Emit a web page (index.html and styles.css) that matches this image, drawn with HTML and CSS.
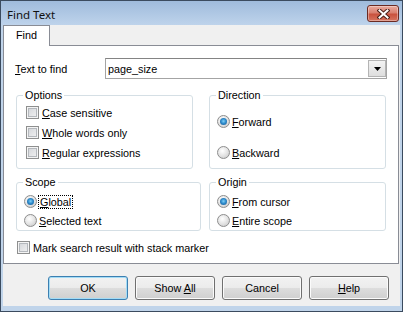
FILE: index.html
```html
<!DOCTYPE html>
<html>
<head>
    <title>Find Text</title>
    <link rel="stylesheet" href="styles.css">
</head>
<body>
    <div class="window">
        <div class="titlebar">
            <span class="title">Find Text</span>
            <div class="close">
                <svg width="13" height="10" viewBox="0 0 13 10">
                    <path d="M2.5 1.5 L10.5 8.5 M10.5 1.5 L2.5 8.5" stroke="#4a1e16" stroke-width="4" stroke-linecap="square" fill="none"/>
                    <path d="M2.5 1.5 L10.5 8.5 M10.5 1.5 L2.5 8.5" stroke="#fff" stroke-width="2" stroke-linecap="square" fill="none"/>
                </svg>
            </div>
        </div>
        <div class="client">
            <div class="tabs">
                <div class="tab">Find</div>
            </div>
            <div class="panel">
                <div class="find-row">
                    <span class="find-label"><u>T</u>ext to find</span>
                    <div class="combo">
                        <span>page_size</span>
                        <span class="drop">
                            <svg width="7" height="4" viewBox="0 0 7 4"><polygon points="0,0 7,0 3.5,4" fill="#000"/></svg>
                        </span>
                    </div>
                </div>

                <div class="groups">
                    <fieldset class="group options">
                        <legend>Options</legend>
                        <div class="list checks">
                            <div class="opt"><span class="box"></span><span><u>C</u>ase sensitive</span></div>
                            <div class="opt"><span class="box"></span><span><u>W</u>hole words only</span></div>
                            <div class="opt"><span class="box"></span><span><u>R</u>egular expressions</span></div>
                        </div>
                    </fieldset>
                    <fieldset class="group direction">
                        <legend>Direction</legend>
                        <div class="list far">
                            <div class="opt"><span class="radio on"></span><span><u>F</u>orward</span></div>
                            <div class="opt"><span class="radio"></span><span><u>B</u>ackward</span></div>
                        </div>
                    </fieldset>
                    <fieldset class="group scope">
                        <legend>Scope</legend>
                        <div class="list near">
                            <div class="opt"><span class="radio on"></span><span class="focus"><u>G</u>lobal</span></div>
                            <div class="opt"><span class="radio"></span><span><u>S</u>elected text</span></div>
                        </div>
                    </fieldset>
                    <fieldset class="group origin">
                        <legend>Origin</legend>
                        <div class="list near">
                            <div class="opt"><span class="radio on"></span><span><u>F</u>rom cursor</span></div>
                            <div class="opt"><span class="radio"></span><span><u>E</u>ntire scope</span></div>
                        </div>
                    </fieldset>
                </div>

                <div class="opt mark"><span class="box"></span><span>Mark search result with stack marker</span></div>
            </div>

            <div class="buttons">
                <div class="btn default">OK</div>
                <div class="btn">Show <u>A</u>ll</div>
                <div class="btn">Cancel</div>
                <div class="btn"><u>H</u>elp</div>
            </div>
        </div>
    </div>
</body>
</html>
```

FILE: styles.css
```css
* {
    box-sizing: border-box;
}

body {
    margin: 0;
    font-family: "Liberation Sans", Arial, sans-serif;
    font-size: 10.8px;
    color: #000;
    background: #fff;
}

.window {
    width: 403px;
    height: 312px;
    border: 1px solid #3b4b5f;
    background: #c0d4ea;
    padding: 0 2px 5px 2px;
    display: flex;
    flex-direction: column;
}

/* title bar */
.titlebar {
    height: 24px;
    margin: 0 -2px;
    padding: 0 3px 0 6px;
    display: flex;
    justify-content: space-between;
    align-items: flex-start;
    background: linear-gradient(#9fbbdc, #bed3eb);
}

.title {
    font-family: "Noto Sans", sans-serif;
    font-size: 11.5px;
    line-height: 16px;
    margin-top: 6px;
    color: #111;
}

.close {
    width: 32px;
    height: 17px;
    margin-top: 4px;
    border: 1px solid #6b2a22;
    border-radius: 3px;
    background: linear-gradient(#e9aa9d, #d98070 45%, #c9523e 55%, #d6745f);
    box-shadow: inset 0 0 0 1px rgba(255,255,255,0.35);
    display: flex;
    align-items: center;
    justify-content: center;
}

/* client area */
.client {
    flex: 1;
    background: #f0f0f0;
    padding-right: 1px;
    display: flex;
    flex-direction: column;
}

.tabs {
    display: flex;
    height: 20px;
}

.tab {
    width: 47px;
    height: 21px;
    background: #fff;
    border: 1px solid #898c95;
    border-bottom: 0;
    text-align: center;
    line-height: 19px;
    position: relative;
    z-index: 1;
}

.panel {
    height: 219px;
    background: #fff;
    border: 1px solid #898c95;
    padding: 12px 0 0 11px;
}

.find-row {
    display: flex;
    align-items: center;
    height: 21px;
}

.find-label {
    width: 90px;
}

.combo {
    width: 282px;
    height: 21px;
    border: 1px solid #a4a4a4;
    border-top-color: #848484;
    padding: 0 0 0 2px;
    display: flex;
    align-items: center;
    justify-content: space-between;
}

.drop {
    width: 18px;
    height: 17px;
    border: 1px solid #b4b4b4;
    background: linear-gradient(#f3f3f3, #dedede);
    display: flex;
    align-items: center;
    justify-content: center;
}

/* group boxes */
.groups {
    display: grid;
    grid-template-columns: 185px 177px;
    column-gap: 8px;
    row-gap: 7px;
    margin: 10px 0 0 1px;
}

fieldset.group {
    margin: 0;
    padding: 0;
    min-width: 0;
    border: 1px solid #d5dfe5;
    border-radius: 3px;
}

.group legend {
    padding: 0 2px;
    margin-left: 6px;
    line-height: 13px;
}

.options {
    width: 177px;
    height: 80px;
}

.direction {
    height: 80px;
}

.scope,
.origin {
    height: 55px;
}

.list {
    display: flex;
    flex-direction: column;
}

.checks {
    gap: 7px;
    padding: 4px 0 0 9px;
}

.far {
    gap: 18px;
    padding: 13px 0 0 7px;
}

.near {
    gap: 6px;
    padding: 6px 0 0 7px;
}

.opt {
    display: flex;
    align-items: center;
    height: 13px;
    gap: 3px;
    white-space: nowrap;
}

.radio + span {
    margin-left: -1px;
}

.box {
    width: 13px;
    height: 13px;
    flex: none;
    border: 1px solid #8e8f8f;
    background: linear-gradient(135deg, #d0d3d7, #f4f4f4);
    box-shadow: inset 0 0 0 1px #f4f4f4, inset 0 0 0 2px #b4b8bd;
}

.radio {
    width: 13px;
    height: 13px;
    flex: none;
    border-radius: 50%;
    border: 1px solid #8d8d8d;
    background: radial-gradient(circle at 40% 35%, #fff, #e4e4e4 50%, #c4c4c4);
    display: flex;
    align-items: center;
    justify-content: center;
}

.radio.on::after {
    content: "";
    width: 7px;
    height: 7px;
    border-radius: 50%;
    background: radial-gradient(circle at 50% 45%, #7fd0f7, #2f8ccc 45%, #17518a);
}

.focus {
    outline: 1px dotted #000;
    outline-offset: 0;
    padding: 0 1px;
}

.mark {
    margin: 10px 0 0 2px;
}

/* bottom buttons */
.buttons {
    display: flex;
    justify-content: flex-end;
    gap: 7px;
    padding: 12px 10px 0 0;
}

.btn {
    width: 80px;
    height: 24px;
    border: 1px solid #707070;
    border-radius: 3px;
    background: linear-gradient(#f2f2f2, #ebebeb 50%, #dddddd 50%, #cfcfcf);
    box-shadow: inset 0 0 0 1px #fbfbfb;
    text-align: center;
    line-height: 22px;
}

.btn.default {
    border-color: #3c7fb1;
    box-shadow: inset 0 0 0 1px #a3dcf6;
}
```
